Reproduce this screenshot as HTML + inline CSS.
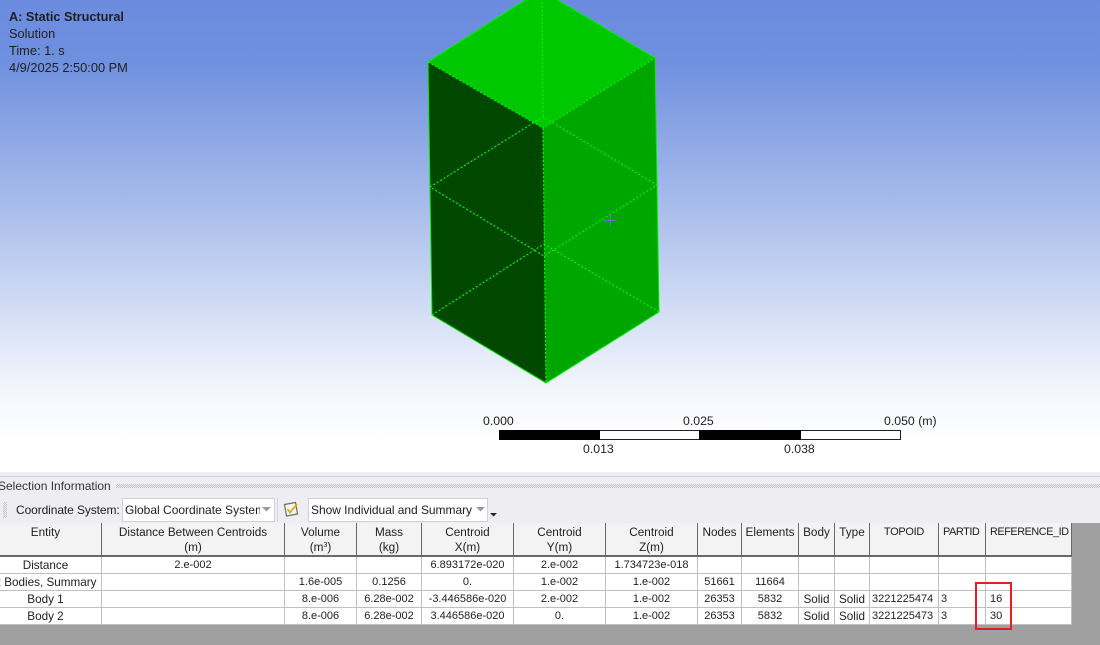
<!DOCTYPE html>
<html><head><meta charset="utf-8"><style>
html,body{margin:0;padding:0;background:#a0a0a0}
#p{position:relative;width:1100px;height:645px;overflow:hidden;background:#a0a0a0;font-family:"Liberation Sans",sans-serif;font-size:12px;color:#1e1e1e}
.a{position:absolute;white-space:nowrap;line-height:16px}
#vp{position:absolute;left:0;top:0;width:1100px;height:472px;background:linear-gradient(#6b8cde 0,#6f90df 60px,#a8bceb 205px,#f3f6fd 390px,#fff 440px)}
table{position:absolute;left:-10px;top:523px;border-collapse:separate;border-spacing:0;table-layout:fixed;width:1082px;background:#fff}
td{padding:1px 0 0;border-right:1px solid #c0c0c0;border-bottom:1px solid #c0c0c0;text-align:center;height:15px;line-height:15px;overflow:hidden;white-space:nowrap;font-size:11px}
tr.h td{background:#f3f3f3;border-right:1px solid #696969;border-bottom:2px solid #696969;vertical-align:top;padding-top:2px;height:30px;line-height:15px;font-size:11.75px}
.t{font-size:11.7px}
td.l{text-align:left;padding-left:2px}
sup{font-size:7px;line-height:0;vertical-align:baseline;position:relative;top:-4px}
.d{background:conic-gradient(#c2c2ca 25%,transparent 0 50%,#c2c2ca 0 75%,transparent 0) 0 0/2px 2px}
.s{font-size:12.3px}
</style></head><body><div id="p">
<div id="vp"></div>
<svg class="a" style="left:0;top:0" width="1100" height="472" viewBox="0 0 1100 472">
<polygon points="541,-10 655,58 543,128 428,62" fill="#00c800"/>
<polygon points="428,62 543,128 546,383 432,315" fill="#004800"/>
<polygon points="655,58 543,128 546,383 659,312" fill="#00a600"/>
<g fill="none" stroke="#00f000" stroke-width="1">
<polyline points="541,-10 428,62 432,315 546,383 659,312 655,58 541,-10"/>
</g>
<g fill="none" stroke="#00f400" stroke-width="1.200" stroke-dasharray="2 2">
<path d="M428,62L543,128L655,58M543,128L546,383M542,-10L543,117"/>
<path d="M430,187L543,117L657,185L544,256L430,187"/>
<path d="M432,315L544,244L659,312"/>
</g>
<path d="M604,220.500H616M610.500,214V226" stroke="#6a70e0" stroke-width="1" fill="none"/>
</svg>
<div class="a" style="left:9px;top:9px;font-weight:bold;font-size:12.7px">A: Static Structural</div>
<div class="a" style="left:9px;top:26px;font-size:12.8px">Solution</div>
<div class="a" style="left:9px;top:43px;font-size:12.8px">Time: 1. s</div>
<div class="a" style="left:9px;top:60px;font-size:12.8px">4/9/2025 2:50:00 PM</div>

<div class="a" style="left:499px;top:430px;width:402px;height:10px;border:1px solid #222;box-sizing:border-box;background:#fff"></div>
<div class="a" style="left:499px;top:430px;width:101px;height:10px;background:#000"></div>
<div class="a" style="left:699px;top:430px;width:102px;height:10px;background:#000"></div>
<div class="a s" style="left:483px;top:413px">0.000</div>
<div class="a s" style="left:683px;top:413px">0.025</div>
<div class="a s" style="left:884px;top:413px">0.050 (m)</div>
<div class="a s" style="left:583px;top:441px">0.013</div>
<div class="a s" style="left:784px;top:441px">0.038</div>

<div class="a" style="left:0;top:472px;width:1100px;height:51px;background:#eeeef2"></div>
<div class="a" style="left:0;top:476px;width:1100px;height:1px;background:#ccccdb"></div>
<div class="a" style="left:-2px;top:478px;color:#333">Selection Information</div>
<div class="a d" style="left:116px;top:484px;width:984px;height:4px"></div>
<div class="a d" style="left:3px;top:502px;width:4px;height:16px"></div>
<div class="a" style="left:16px;top:502px;letter-spacing:-.1px">Coordinate System:</div>
<div class="a" style="left:122px;top:498px;width:153px;height:24px;box-sizing:border-box;background:#fff;border:1px solid #cfcfde"></div>
<div class="a" style="left:125px;top:502px;width:135px;overflow:hidden">Global Coordinate System</div>
<svg class="a" style="left:262px;top:507px" width="10" height="6"><path d="M0,0H9L4.500,4.500Z" fill="#999"/></svg>
<div class="a" style="left:277px;top:498px;width:1px;height:24px;background:#d4d4dc"></div>
<svg class="a" style="left:283px;top:501px" width="16" height="17" viewBox="0 0 16 17"><path d="M1.500,3.500L12.500,1.500L14.500,13L3.500,15Z" fill="#f6f6f0" stroke="#6d6d6d" stroke-width="1.200"/><path d="M4.500,8L7,11.500L14,3" fill="none" stroke="#e8a81c" stroke-width="1.800"/></svg>
<div class="a" style="left:308px;top:498px;width:180px;height:24px;box-sizing:border-box;background:#fff;border:1px solid #cfcfde"></div>
<div class="a" style="left:311px;top:502px;letter-spacing:-.04px">Show Individual and Summary</div>
<svg class="a" style="left:476px;top:507px" width="10" height="6"><path d="M0,0H9L4.500,4.500Z" fill="#999"/></svg>
<svg class="a" style="left:490px;top:512px" width="8" height="5"><path d="M0,1H7L3.500,4.500Z" fill="#222"/></svg>

<table>
<colgroup><col style="width:112px"><col style="width:183px"><col style="width:72px"><col style="width:65px"><col style="width:92px"><col style="width:92px"><col style="width:92px"><col style="width:44px"><col style="width:57px"><col style="width:36px"><col style="width:35px"><col style="width:69px"><col style="width:47px"><col style="width:86px"></colgroup>
<tr class="h"><td>Entity</td><td>Distance Between Centroids<br>(m)</td><td>Volume<br>(m<sup>3</sup>)</td><td>Mass<br>(kg)</td><td>Centroid<br>X(m)</td><td>Centroid<br>Y(m)</td><td>Centroid<br>Z(m)</td><td>Nodes</td><td>Elements</td><td>Body</td><td>Type</td><td style="font-size:11px;letter-spacing:-.3px">TOPOID</td><td class="l" style="font-size:11px;letter-spacing:-.5px;padding-left:4px">PARTID</td><td class="l" style="font-size:10.8px;letter-spacing:-.4px;padding-left:4px">REFERENCE_ID</td></tr>
<tr><td class="t">Distance</td><td>2.e-002</td><td></td><td></td><td>6.893172e-020</td><td>2.e-002</td><td>1.734723e-018</td><td></td><td></td><td></td><td></td><td></td><td></td><td></td></tr>
<tr><td class="t">2 Bodies, Summary</td><td></td><td>1.6e-005</td><td>0.1256</td><td>0.</td><td>1.e-002</td><td>1.e-002</td><td>51661</td><td>11664</td><td></td><td></td><td></td><td></td><td></td></tr>
<tr><td class="t">Body 1</td><td></td><td>8.e-006</td><td>6.28e-002</td><td>-3.446586e-020</td><td>2.e-002</td><td>1.e-002</td><td>26353</td><td>5832</td><td class="t">Solid</td><td class="t">Solid</td><td class="l">3221225474</td><td class="l">3</td><td class="l" style="padding-left:4px">16</td></tr>
<tr><td class="t">Body 2</td><td></td><td>8.e-006</td><td>6.28e-002</td><td>3.446586e-020</td><td>0.</td><td>1.e-002</td><td>26353</td><td>5832</td><td class="t">Solid</td><td class="t">Solid</td><td class="l">3221225473</td><td class="l">3</td><td class="l" style="padding-left:4px">30</td></tr>
</table>
<div class="a" style="left:975px;top:582px;width:37px;height:48px;box-sizing:border-box;border:2px solid #e81c24"></div>
</div></body></html>
